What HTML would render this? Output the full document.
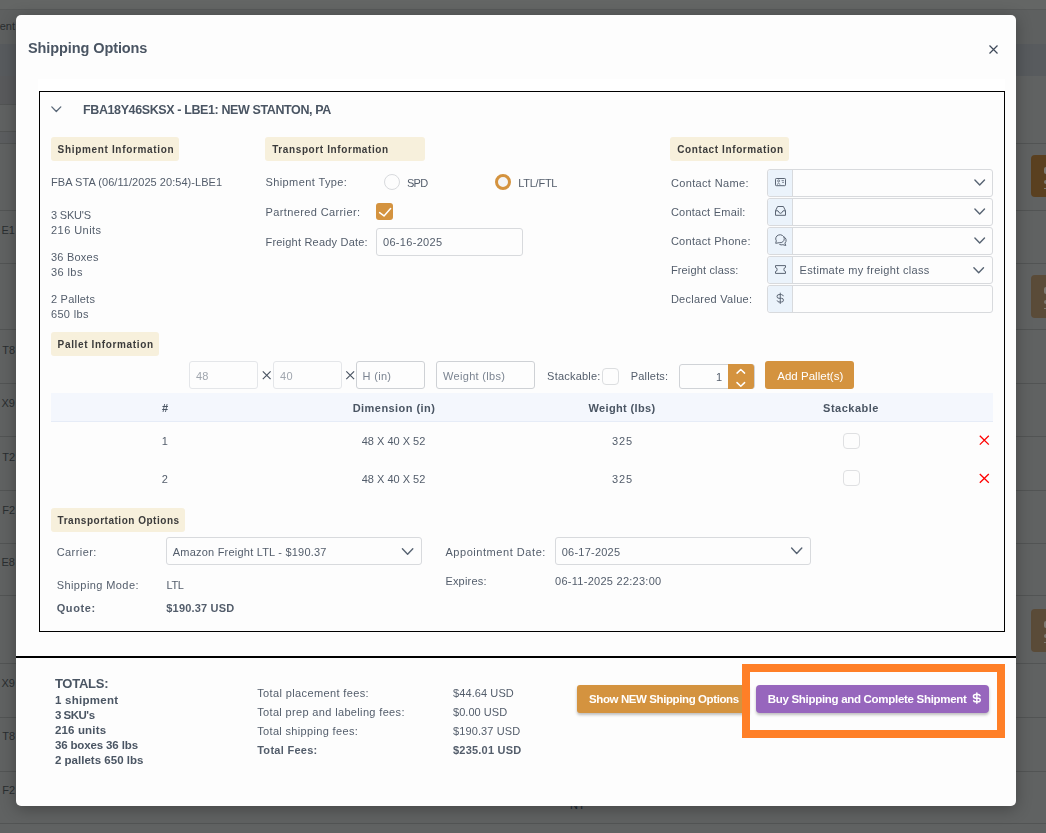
<!DOCTYPE html>
<html><head><meta charset="utf-8"><title>Shipping Options</title>
<style>
html,body{margin:0;padding:0;width:1046px;height:833px;overflow:hidden;background:#616362;}
body{position:relative;font-family:"Liberation Sans",sans-serif;}
.b{position:absolute;box-sizing:content-box;}
svg{display:block;}
.layer{position:absolute;left:0;top:0;width:1046px;height:833px;will-change:transform;}
.t{position:absolute;white-space:nowrap;font-family:"Liberation Sans",sans-serif;}
</style></head><body>
<div class="b" style="left:0px;top:0px;width:1046px;height:9px;background:#646665"></div>
<div class="b" style="left:0px;top:9px;width:1046px;height:35px;background:#5e6060"></div>
<div class="b" style="left:0px;top:9px;width:1046px;height:1px;background:#585a5a"></div>
<div class="b" style="left:0px;top:44px;width:1046px;height:32px;background:#585b5e"></div>
<div class="b" style="left:0px;top:76px;width:1046px;height:757px;background:#606262"></div>
<div class="b" style="left:0px;top:76px;width:30px;height:28px;background:#595a5c"></div>
<div class="b" style="left:0px;top:131px;width:30px;height:12px;background:#5c5e60"></div>
<div class="b" style="left:0px;top:104px;width:30px;height:1px;background:#525454"></div>
<div class="b" style="left:0px;top:131px;width:30px;height:1px;background:#525454"></div>
<div class="b" style="left:0px;top:143px;width:1046px;height:1px;background:#525454"></div>
<div class="b" style="left:0px;top:210px;width:1046px;height:1px;background:#525454"></div>
<div class="b" style="left:0px;top:263px;width:1046px;height:1px;background:#525454"></div>
<div class="b" style="left:0px;top:329px;width:1046px;height:1px;background:#525454"></div>
<div class="b" style="left:0px;top:383px;width:1046px;height:1px;background:#525454"></div>
<div class="b" style="left:0px;top:436px;width:1046px;height:1px;background:#525454"></div>
<div class="b" style="left:0px;top:490px;width:1046px;height:1px;background:#525454"></div>
<div class="b" style="left:0px;top:543px;width:1046px;height:1px;background:#525454"></div>
<div class="b" style="left:0px;top:595px;width:1046px;height:1px;background:#525454"></div>
<div class="b" style="left:0px;top:663px;width:1046px;height:1px;background:#525454"></div>
<div class="b" style="left:0px;top:717px;width:1046px;height:1px;background:#525454"></div>
<div class="b" style="left:0px;top:771px;width:1046px;height:1px;background:#525454"></div>
<div class="b" style="left:0px;top:823px;width:1046px;height:1px;background:#525454"></div>
<div class="b" style="left:1031px;top:155px;width:30px;height:42px;background:#5a4020;border-radius:4px"></div>
<div class="b" style="left:1031px;top:275px;width:30px;height:43px;background:#5a4b38;border-radius:4px"></div>
<div class="b" style="left:1031px;top:609px;width:30px;height:43px;background:#5a4b38;border-radius:4px"></div>
<div class="b" style="left:1044px;top:167px;width:2px;height:7px;background:#7e7a73;border-radius:2px 0 0 2px"></div>
<div class="b" style="left:1044px;top:180px;width:2px;height:4px;background:#7e7a73;border-radius:2px 0 0 2px"></div>
<div class="b" style="left:1044px;top:188px;width:2px;height:1px;background:#7e7a73"></div>
<div class="b" style="left:1044px;top:287px;width:2px;height:7px;background:#7e7a73;border-radius:2px 0 0 2px"></div>
<div class="b" style="left:1044px;top:300px;width:2px;height:4px;background:#7e7a73;border-radius:2px 0 0 2px"></div>
<div class="b" style="left:1044px;top:308px;width:2px;height:1px;background:#7e7a73"></div>
<div class="b" style="left:1044px;top:621px;width:2px;height:7px;background:#7e7a73;border-radius:2px 0 0 2px"></div>
<div class="b" style="left:1044px;top:634px;width:2px;height:4px;background:#7e7a73;border-radius:2px 0 0 2px"></div>
<div class="b" style="left:1044px;top:642px;width:2px;height:1px;background:#7e7a73"></div>
<span class="t" style="right:1031px;top:20.5px;font-size:11px;line-height:11px;color:#2a2e30">ent</span>
<span class="t" style="right:1031px;top:225px;font-size:11px;line-height:11px;color:#2a2e30">E1</span>
<span class="t" style="right:1031px;top:345px;font-size:11px;line-height:11px;color:#2a2e30">T8</span>
<span class="t" style="right:1031px;top:398px;font-size:11px;line-height:11px;color:#2a2e30">X9</span>
<span class="t" style="right:1031px;top:452px;font-size:11px;line-height:11px;color:#2a2e30">T2</span>
<span class="t" style="right:1031px;top:505px;font-size:11px;line-height:11px;color:#2a2e30">F2</span>
<span class="t" style="right:1031px;top:557px;font-size:11px;line-height:11px;color:#2a2e30">E8</span>
<span class="t" style="right:1031px;top:678px;font-size:11px;line-height:11px;color:#2a2e30">X9</span>
<span class="t" style="right:1031px;top:731px;font-size:11px;line-height:11px;color:#2a2e30">T8</span>
<span class="t" style="right:1031px;top:785px;font-size:11px;line-height:11px;color:#2a2e30">F2</span>
<span class="t" style="left:570px;top:800px;font-size:11px;line-height:11px;color:#1e2a33;letter-spacing:0.4px">NT</span>
<div class="b" style="left:16px;top:15px;width:1000px;height:791px;background:#fdfdfd;border-radius:5px;box-shadow:0 3px 16px rgba(0,0,0,.3)"></div>
<div class="b" style="left:38px;top:79px;width:967px;height:13px;background:#ffffff"></div>
<div class="b" style="left:39px;top:91px;width:964px;height:539px;border:1px solid #000;background:#fdfdfd"></div>
<div class="b" style="left:51px;top:137px;width:128px;height:24px;background:#f7f0dc;border-radius:3px"></div>
<div class="b" style="left:265px;top:137px;width:160px;height:24px;background:#f7f0dc;border-radius:3px"></div>
<div class="b" style="left:670px;top:137px;width:119px;height:24px;background:#f7f0dc;border-radius:3px"></div>
<div class="b" style="left:51px;top:332px;width:108px;height:24px;background:#f7f0dc;border-radius:3px"></div>
<div class="b" style="left:51px;top:508px;width:134px;height:24px;background:#f7f0dc;border-radius:3px"></div>
<div class="b" style="left:384px;top:174px;width:14px;height:14px;border:1px solid #d8dadd;border-radius:50%;background:#fdfdfd"></div>
<div class="b" style="left:495px;top:174px;width:10px;height:10px;border:3px solid #d4933f;border-radius:50%;background:#f4f5f6"></div>
<div class="b" style="left:376px;top:203px;width:17px;height:17px;background:#d4933f;border-radius:3px"></div>
<div class="b" style="left:376px;top:228px;width:145px;height:26px;border:1px solid #d8dadd;border-radius:3px;background:#fdfdfd"></div>
<div class="b" style="left:767px;top:169px;width:224px;height:26px;border:1px solid #d8dadd;border-radius:3px;background:#fdfdfd"></div>
<div class="b" style="left:768px;top:170px;width:24px;height:26px;border-right:1px solid #d8dadd;border-radius:3px 0 0 3px;background:#ebf3fb"></div>
<div class="b" style="left:767px;top:198px;width:224px;height:26px;border:1px solid #d8dadd;border-radius:3px;background:#fdfdfd"></div>
<div class="b" style="left:768px;top:199px;width:24px;height:26px;border-right:1px solid #d8dadd;border-radius:3px 0 0 3px;background:#ebf3fb"></div>
<div class="b" style="left:767px;top:227px;width:224px;height:26px;border:1px solid #d8dadd;border-radius:3px;background:#fdfdfd"></div>
<div class="b" style="left:768px;top:228px;width:24px;height:26px;border-right:1px solid #d8dadd;border-radius:3px 0 0 3px;background:#ebf3fb"></div>
<div class="b" style="left:767px;top:256px;width:224px;height:26px;border:1px solid #d8dadd;border-radius:3px;background:#fdfdfd"></div>
<div class="b" style="left:768px;top:257px;width:24px;height:26px;border-right:1px solid #d8dadd;border-radius:3px 0 0 3px;background:#ebf3fb"></div>
<div class="b" style="left:767px;top:285px;width:224px;height:26px;border:1px solid #d8dadd;border-radius:3px;background:#fdfdfd"></div>
<div class="b" style="left:768px;top:286px;width:24px;height:26px;border-right:1px solid #d8dadd;border-radius:3px 0 0 3px;background:#ebf3fb"></div>
<div class="b" style="left:189px;top:361px;width:67px;height:26px;border:1px solid #e4e6e9;border-radius:3px;background:#fdfdfd"></div>
<div class="b" style="left:273px;top:361px;width:67px;height:26px;border:1px solid #e4e6e9;border-radius:3px;background:#fdfdfd"></div>
<div class="b" style="left:356px;top:361px;width:67px;height:26px;border:1px solid #ced1d5;border-radius:3px;background:#fdfdfd"></div>
<div class="b" style="left:436px;top:361px;width:97px;height:26px;border:1px solid #ced1d5;border-radius:3px;background:#fdfdfd"></div>
<div class="b" style="left:602px;top:368px;width:15px;height:15px;border:1px solid #dcdee0;border-radius:4px;background:#fdfdfd"></div>
<div class="b" style="left:679px;top:364px;width:74px;height:23px;border:1px solid #d0d3d7;border-radius:3px;background:#fdfdfd"></div>
<div class="b" style="left:728px;top:364px;width:26px;height:25px;background:#d4933f;border-radius:0 3px 3px 0"></div>
<div class="b" style="left:765px;top:361px;width:89px;height:28px;background:#d4933f;border-radius:3px"></div>
<div class="b" style="left:51px;top:393px;width:942px;height:28px;background:#f4f7fd;border-bottom:1px solid #e6ecf7"></div>
<div class="b" style="left:843px;top:433px;width:15px;height:14px;border:1px solid #dfe0e2;border-radius:4px;background:#fdfdfd"></div>
<div class="b" style="left:843px;top:470px;width:15px;height:14px;border:1px solid #dfe0e2;border-radius:4px;background:#fdfdfd"></div>
<div class="b" style="left:166px;top:537px;width:254px;height:26px;border:1px solid #d8dadd;border-radius:3px;background:#fdfdfd"></div>
<div class="b" style="left:555px;top:537px;width:254px;height:26px;border:1px solid #d8dadd;border-radius:3px;background:#fdfdfd"></div>
<div class="b" style="left:16px;top:656px;width:1000px;height:2px;background:#000"></div>
<div class="b" style="left:577px;top:685px;width:172px;height:28px;background:#d4933f;border-radius:3px;box-shadow:0 2px 3px rgba(0,0,0,.25)"></div>
<div class="b" style="left:756px;top:685px;width:233px;height:28px;background:#9766bd;border-radius:4px;box-shadow:0 2px 3px rgba(0,0,0,.25)"></div>
<div class="b" style="left:742px;top:664px;width:247px;height:58px;border:8px solid #ff7f27"></div>
<svg class="b" style="left:0;top:0" width="1046" height="833" viewBox="0 0 1046 833"><path d="M989.5 45.5L997.5 53.5M997.5 45.5L989.5 53.5" stroke="#3f4a5a" stroke-width="1.2" fill="none"/><path d="M51.80 106.90 L56.30 111.50 L60.80 106.90" fill="none" stroke="#5a6878" stroke-width="1.3" stroke-linecap="round" stroke-linejoin="round"/><path d="M974.90 180.00 L979.70 185.00 L984.50 180.00" fill="none" stroke="#586473" stroke-width="1.4" stroke-linecap="round" stroke-linejoin="round"/><path d="M974.90 209.00 L979.70 214.00 L984.50 209.00" fill="none" stroke="#586473" stroke-width="1.4" stroke-linecap="round" stroke-linejoin="round"/><path d="M974.90 238.00 L979.70 243.00 L984.50 238.00" fill="none" stroke="#586473" stroke-width="1.4" stroke-linecap="round" stroke-linejoin="round"/><path d="M973.90 267.70 L978.70 272.70 L983.50 267.70" fill="none" stroke="#586473" stroke-width="1.4" stroke-linecap="round" stroke-linejoin="round"/><path d="M379.6 212.6 L384 215.9 L390.6 208.6" fill="none" stroke="#fff" stroke-width="1.5" stroke-linecap="round" stroke-linejoin="round"/><rect x="775.5" y="178.5" width="10" height="7.2" rx="0.8" fill="none" stroke="#5b6574" stroke-width="1.0"/><circle cx="778.6" cy="180.9" r="1" fill="none" stroke="#5b6574" stroke-width=".8"/><path d="M776.9 184.6 Q778.6 181.8 780.3 184.6 M781.6 180.6 H783.9 M782.2 182.4 H783.9" fill="none" stroke="#5b6574" stroke-width=".8"/><path d="M775.5 210.8 L777.6 206.5 H783.4 L785.5 210.8 V215.3 H775.5 Z M775.5 210.8 H778 Q779 213.3 780.5 213.3 Q782 213.3 783 210.8 H785.5" fill="none" stroke="#5b6574" stroke-width="1.0" stroke-linejoin="round"/><path d="M775.7 243.3 L776.3 240.8 A4.3 4 0 1 1 779.25 242.7 Z" fill="none" stroke="#5b6574" stroke-width="1.0" stroke-linejoin="round"/><path d="M783.9 236.8 A4 3.9 0 0 1 784.9 243.1 L785.8 245.5 L782.9 244.7 A4.2 3.9 0 0 1 779.3 244.3" fill="none" stroke="#5b6574" stroke-width="1.0" stroke-linejoin="round"/><path d="M775.5 265.6 H785.5 V267.5 A1.6 2 0 0 0 785.5 271.5 V273.4 H775.5 V271.5 A1.6 2 0 0 0 775.5 267.5 Z" fill="none" stroke="#5b6574" stroke-width="1.0" stroke-linejoin="round"/><path d="M783.26 295.82 A1.92 1.86 0 0 0 781.53 294.58 L778.97 294.58 A1.92 1.86 0 0 0 778.97 298.30 L781.53 298.30 A1.92 1.86 0 0 1 781.53 302.02 L778.97 302.02 A1.92 1.86 0 0 1 777.24 300.78 M780.25 293.09 L780.25 303.51" fill="none" stroke="#5b6574" stroke-width="1.0" stroke-linecap="round" stroke-linejoin="round"/><path d="M262.8 371.3L270.6 379.1M270.6 371.3L262.8 379.1" stroke="#4b5563" stroke-width="1.2" fill="none"/><path d="M346.3 371.3L354.1 379.1M354.1 371.3L346.3 379.1" stroke="#4b5563" stroke-width="1.2" fill="none"/><path d="M737.00 373.10 L740.80 369.50 L744.60 373.10" fill="none" stroke="#fff" stroke-width="1.5" stroke-linecap="round" stroke-linejoin="round"/><path d="M737.00 382.60 L740.80 386.20 L744.60 382.60" fill="none" stroke="#fff" stroke-width="1.5" stroke-linecap="round" stroke-linejoin="round"/><path d="M979.8 435.8L988.8 444.6M988.8 435.8L979.8 444.6" stroke="#ff0000" stroke-width="1.3" fill="none"/><path d="M979.8 474.0L988.8 482.8M988.8 474.0L979.8 482.8" stroke="#ff0000" stroke-width="1.3" fill="none"/><path d="M402.40 548.70 L407.60 554.30 L412.80 548.70" fill="none" stroke="#586473" stroke-width="1.4" stroke-linecap="round" stroke-linejoin="round"/><path d="M791.60 548.10 L796.70 553.50 L801.80 548.10" fill="none" stroke="#586473" stroke-width="1.4" stroke-linecap="round" stroke-linejoin="round"/><path d="M980.05 695.67 A2.04 1.86 0 0 0 978.21 694.43 L975.49 694.43 A2.04 1.86 0 0 0 975.49 698.15 L978.21 698.15 A2.04 1.86 0 0 1 978.21 701.87 L975.49 701.87 A2.04 1.86 0 0 1 973.65 700.63 M976.85 692.94 L976.85 703.36" fill="none" stroke="#fff" stroke-width="1.5" stroke-linecap="round" stroke-linejoin="round"/></svg>
<div class="layer"><span class="t" id="t0" style="left:28.00px;top:41px;font-size:14.5px;line-height:14.5px;font-weight:700;color:#4a5563;letter-spacing:-0.092px;">Shipping Options</span>
<span class="t" id="t1" style="left:83.00px;top:104px;font-size:12.5px;line-height:12.5px;font-weight:700;color:#4a5563;letter-spacing:-0.389px;">FBA18Y46SKSX - LBE1: NEW STANTON, PA</span>
<span class="t" id="t2" style="left:57.60px;top:145px;font-size:10px;line-height:10px;font-weight:700;color:#3b3b3b;letter-spacing:0.666px;">Shipment Information</span>
<span class="t" id="t3" style="left:272.20px;top:145px;font-size:10px;line-height:10px;font-weight:700;color:#3b3b3b;letter-spacing:0.605px;">Transport Information</span>
<span class="t" id="t4" style="left:677.20px;top:145px;font-size:10px;line-height:10px;font-weight:700;color:#3b3b3b;letter-spacing:0.611px;">Contact Information</span>
<span class="t" id="t5" style="left:57.60px;top:340px;font-size:10px;line-height:10px;font-weight:700;color:#3b3b3b;letter-spacing:0.650px;">Pallet Information</span>
<span class="t" id="t6" style="left:57.60px;top:516px;font-size:10px;line-height:10px;font-weight:700;color:#3b3b3b;letter-spacing:0.521px;">Transportation Options</span>
<span class="t" id="t7" style="left:51.00px;top:177px;font-size:11px;line-height:11px;font-weight:400;color:#535d6b;letter-spacing:0.050px;">FBA STA (06/11/2025 20:54)-LBE1</span>
<span class="t" id="t8" style="left:51.00px;top:210px;font-size:11px;line-height:11px;font-weight:400;color:#535d6b;letter-spacing:-0.189px;">3 SKU&#x27;S</span>
<span class="t" id="t9" style="left:51.00px;top:225px;font-size:11px;line-height:11px;font-weight:400;color:#535d6b;letter-spacing:0.452px;">216 Units</span>
<span class="t" id="t10" style="left:51.00px;top:252px;font-size:11px;line-height:11px;font-weight:400;color:#535d6b;letter-spacing:0.218px;">36 Boxes</span>
<span class="t" id="t11" style="left:51.00px;top:267px;font-size:11px;line-height:11px;font-weight:400;color:#535d6b;letter-spacing:0.408px;">36 lbs</span>
<span class="t" id="t12" style="left:51.00px;top:294px;font-size:11px;line-height:11px;font-weight:400;color:#535d6b;letter-spacing:0.212px;">2 Pallets</span>
<span class="t" id="t13" style="left:51.00px;top:309px;font-size:11px;line-height:11px;font-weight:400;color:#535d6b;letter-spacing:0.319px;">650 lbs</span>
<span class="t" id="t14" style="left:265.50px;top:177px;font-size:11px;line-height:11px;font-weight:400;color:#535d6b;letter-spacing:0.397px;">Shipment Type:</span>
<span class="t" id="t15" style="left:407.00px;top:178px;font-size:11px;line-height:11px;font-weight:400;color:#535d6b;letter-spacing:-0.762px;">SPD</span>
<span class="t" id="t16" style="left:518.20px;top:178px;font-size:11px;line-height:11px;font-weight:400;color:#535d6b;letter-spacing:-0.244px;">LTL/FTL</span>
<span class="t" id="t17" style="left:265.50px;top:207px;font-size:11px;line-height:11px;font-weight:400;color:#535d6b;letter-spacing:0.380px;">Partnered Carrier:</span>
<span class="t" id="t18" style="left:265.50px;top:237px;font-size:11px;line-height:11px;font-weight:400;color:#535d6b;letter-spacing:0.203px;">Freight Ready Date:</span>
<span class="t" id="t19" style="left:383.00px;top:237px;font-size:11px;line-height:11px;font-weight:400;color:#535d6b;letter-spacing:0.313px;">06-16-2025</span>
<span class="t" id="t20" style="left:670.90px;top:178px;font-size:11px;line-height:11px;font-weight:400;color:#535d6b;letter-spacing:0.352px;">Contact Name:</span>
<span class="t" id="t21" style="left:670.90px;top:207px;font-size:11px;line-height:11px;font-weight:400;color:#535d6b;letter-spacing:0.228px;">Contact Email:</span>
<span class="t" id="t22" style="left:670.90px;top:236px;font-size:11px;line-height:11px;font-weight:400;color:#535d6b;letter-spacing:0.289px;">Contact Phone:</span>
<span class="t" id="t23" style="left:670.90px;top:265px;font-size:11px;line-height:11px;font-weight:400;color:#535d6b;letter-spacing:0.160px;">Freight class:</span>
<span class="t" id="t24" style="left:670.90px;top:294px;font-size:11px;line-height:11px;font-weight:400;color:#535d6b;letter-spacing:0.260px;">Declared Value:</span>
<span class="t" id="t25" style="left:799.60px;top:265px;font-size:11px;line-height:11px;font-weight:400;color:#535d6b;letter-spacing:0.306px;">Estimate my freight class</span>
<span class="t" id="t26" style="left:195.90px;top:371px;font-size:11px;line-height:11px;font-weight:400;color:#a0a6ae;letter-spacing:0.300px;">48</span>
<span class="t" id="t27" style="left:280.00px;top:371px;font-size:11px;line-height:11px;font-weight:400;color:#a0a6ae;letter-spacing:0.300px;">40</span>
<span class="t" id="t28" style="left:362.60px;top:371px;font-size:11px;line-height:11px;font-weight:400;color:#7b8491;letter-spacing:0.300px;">H (in)</span>
<span class="t" id="t29" style="left:443.10px;top:371px;font-size:11px;line-height:11px;font-weight:400;color:#7b8491;letter-spacing:0.300px;">Weight (lbs)</span>
<span class="t" id="t30" style="left:547.10px;top:371px;font-size:11px;line-height:11px;font-weight:400;color:#535d6b;letter-spacing:0.214px;">Stackable:</span>
<span class="t" id="t31" style="left:630.80px;top:371px;font-size:11px;line-height:11px;font-weight:400;color:#535d6b;letter-spacing:0.175px;">Pallets:</span>
<span class="t" id="t32" style="left:716.00px;top:372px;font-size:11px;line-height:11px;font-weight:400;color:#535d6b;letter-spacing:0.300px;">1</span>
<span class="t" id="t33" style="left:777.20px;top:371px;font-size:11.5px;line-height:11.5px;font-weight:400;color:#ffffff;letter-spacing:0.026px;">Add Pallet(s)</span>
<span class="t" id="t34" style="left:165.20px;top:403px;font-size:11px;line-height:11px;font-weight:700;color:#4a5563;letter-spacing:0.400px;transform:translateX(-50%);">#</span>
<span class="t" id="t35" style="left:394.00px;top:403px;font-size:11px;line-height:11px;font-weight:700;color:#4a5563;letter-spacing:0.439px;transform:translateX(-50%);">Dimension (in)</span>
<span class="t" id="t36" style="left:622.00px;top:403px;font-size:11px;line-height:11px;font-weight:700;color:#4a5563;letter-spacing:0.342px;transform:translateX(-50%);">Weight (lbs)</span>
<span class="t" id="t37" style="left:851.00px;top:403px;font-size:11px;line-height:11px;font-weight:700;color:#4a5563;letter-spacing:0.503px;transform:translateX(-50%);">Stackable</span>
<span class="t" id="t38" style="left:165.00px;top:436px;font-size:11px;line-height:11px;font-weight:400;color:#535d6b;letter-spacing:0.300px;transform:translateX(-50%);">1</span>
<span class="t" id="t39" style="left:393.50px;top:436px;font-size:11px;line-height:11px;font-weight:400;color:#535d6b;letter-spacing:-0.001px;transform:translateX(-50%);">48 X 40 X 52</span>
<span class="t" id="t40" style="left:622.50px;top:436px;font-size:11px;line-height:11px;font-weight:400;color:#535d6b;letter-spacing:0.920px;transform:translateX(-50%);">325</span>
<span class="t" id="t41" style="left:165.00px;top:474px;font-size:11px;line-height:11px;font-weight:400;color:#535d6b;letter-spacing:0.300px;transform:translateX(-50%);">2</span>
<span class="t" id="t42" style="left:393.50px;top:474px;font-size:11px;line-height:11px;font-weight:400;color:#535d6b;letter-spacing:-0.001px;transform:translateX(-50%);">48 X 40 X 52</span>
<span class="t" id="t43" style="left:622.50px;top:474px;font-size:11px;line-height:11px;font-weight:400;color:#535d6b;letter-spacing:0.920px;transform:translateX(-50%);">325</span>
<span class="t" id="t44" style="left:56.70px;top:547px;font-size:11px;line-height:11px;font-weight:400;color:#535d6b;letter-spacing:0.433px;">Carrier:</span>
<span class="t" id="t45" style="left:172.80px;top:547px;font-size:11px;line-height:11px;font-weight:400;color:#535d6b;letter-spacing:0.212px;">Amazon Freight LTL - $190.37</span>
<span class="t" id="t46" style="left:56.70px;top:580px;font-size:11px;line-height:11px;font-weight:400;color:#535d6b;letter-spacing:0.411px;">Shipping Mode:</span>
<span class="t" id="t47" style="left:166.60px;top:580px;font-size:11px;line-height:11px;font-weight:400;color:#535d6b;letter-spacing:-0.370px;">LTL</span>
<span class="t" id="t48" style="left:56.70px;top:603px;font-size:11px;line-height:11px;font-weight:700;color:#535d6b;letter-spacing:0.589px;">Quote:</span>
<span class="t" id="t49" style="left:166.30px;top:603px;font-size:11px;line-height:11px;font-weight:700;color:#535d6b;letter-spacing:0.175px;">$190.37 USD</span>
<span class="t" id="t50" style="left:445.40px;top:547px;font-size:11px;line-height:11px;font-weight:400;color:#535d6b;letter-spacing:0.555px;">Appointment Date:</span>
<span class="t" id="t51" style="left:561.70px;top:547px;font-size:11px;line-height:11px;font-weight:400;color:#535d6b;letter-spacing:0.235px;">06-17-2025</span>
<span class="t" id="t52" style="left:445.40px;top:576px;font-size:11px;line-height:11px;font-weight:400;color:#535d6b;letter-spacing:0.193px;">Expires:</span>
<span class="t" id="t53" style="left:555.10px;top:576px;font-size:11px;line-height:11px;font-weight:400;color:#535d6b;letter-spacing:0.265px;">06-11-2025 22:23:00</span>
<span class="t" id="t54" style="left:54.90px;top:677px;font-size:13px;line-height:13px;font-weight:700;color:#4a5563;letter-spacing:-0.238px;">TOTALS:</span>
<span class="t" id="t55" style="left:54.90px;top:695px;font-size:11.5px;line-height:11.5px;font-weight:700;color:#4a5563;letter-spacing:0.270px;">1 shipment</span>
<span class="t" id="t56" style="left:54.90px;top:710px;font-size:11.5px;line-height:11.5px;font-weight:700;color:#4a5563;letter-spacing:-0.478px;">3 SKU&#x27;s</span>
<span class="t" id="t57" style="left:54.90px;top:725px;font-size:11.5px;line-height:11.5px;font-weight:700;color:#4a5563;letter-spacing:0.161px;">216 units</span>
<span class="t" id="t58" style="left:54.90px;top:740px;font-size:11.5px;line-height:11.5px;font-weight:700;color:#4a5563;letter-spacing:-0.134px;">36 boxes 36 lbs</span>
<span class="t" id="t59" style="left:54.90px;top:755px;font-size:11.5px;line-height:11.5px;font-weight:700;color:#4a5563;letter-spacing:0.021px;">2 pallets 650 lbs</span>
<span class="t" id="t60" style="left:257.20px;top:688px;font-size:11px;line-height:11px;font-weight:400;color:#535d6b;letter-spacing:0.377px;">Total placement fees:</span>
<span class="t" id="t61" style="left:257.20px;top:707px;font-size:11px;line-height:11px;font-weight:400;color:#535d6b;letter-spacing:0.346px;">Total prep and labeling fees:</span>
<span class="t" id="t62" style="left:257.20px;top:726px;font-size:11px;line-height:11px;font-weight:400;color:#535d6b;letter-spacing:0.338px;">Total shipping fees:</span>
<span class="t" id="t63" style="left:257.20px;top:745px;font-size:11px;line-height:11px;font-weight:700;color:#535d6b;letter-spacing:0.283px;">Total Fees:</span>
<span class="t" id="t64" style="left:453.00px;top:688px;font-size:11px;line-height:11px;font-weight:400;color:#535d6b;letter-spacing:0.096px;">$44.64 USD</span>
<span class="t" id="t65" style="left:453.00px;top:707px;font-size:11px;line-height:11px;font-weight:400;color:#535d6b;letter-spacing:0.036px;">$0.00 USD</span>
<span class="t" id="t66" style="left:453.00px;top:726px;font-size:11px;line-height:11px;font-weight:400;color:#535d6b;letter-spacing:0.105px;">$190.37 USD</span>
<span class="t" id="t67" style="left:453.00px;top:745px;font-size:11px;line-height:11px;font-weight:700;color:#535d6b;letter-spacing:0.215px;">$235.01 USD</span>
<span class="t" id="t68" style="left:589.10px;top:694px;font-size:11.5px;line-height:11.5px;font-weight:700;color:#ffffff;letter-spacing:-0.406px;">Show NEW Shipping Options</span>
<span class="t" id="t69" style="left:767.70px;top:694px;font-size:11.5px;line-height:11.5px;font-weight:700;color:#ffffff;letter-spacing:-0.296px;">Buy Shipping and Complete Shipment</span></div>
</body></html>
